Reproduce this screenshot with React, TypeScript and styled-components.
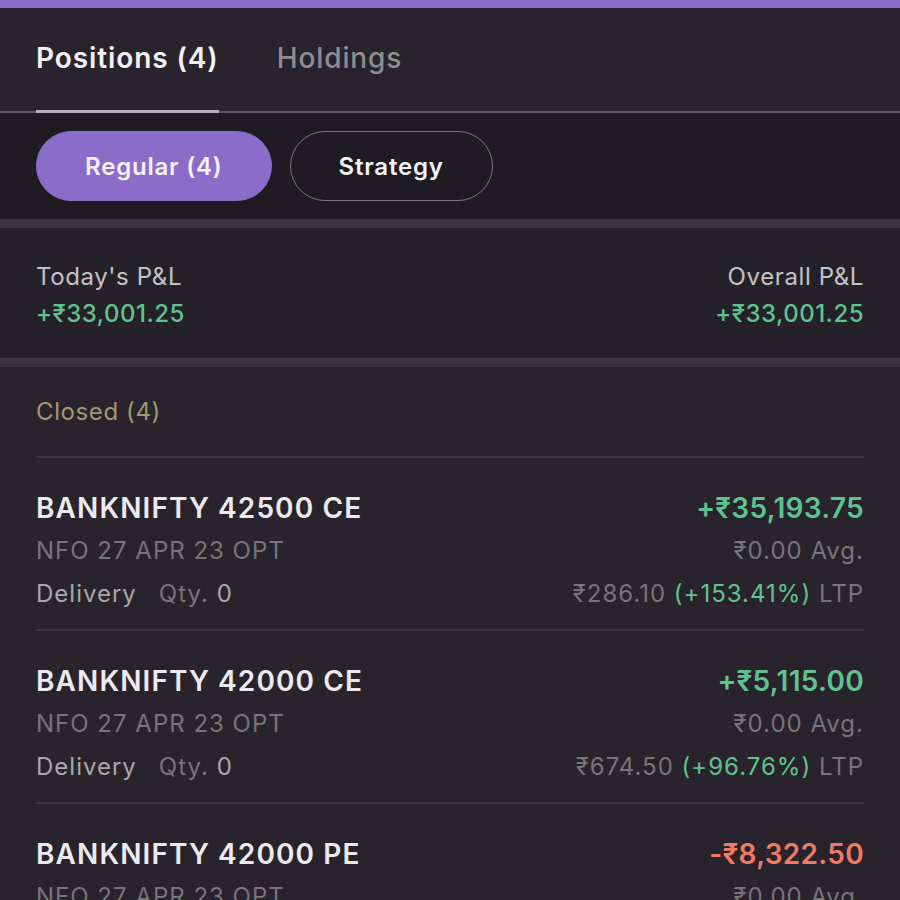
import styled, { createGlobalStyle } from "styled-components";

const Global = createGlobalStyle`
  html, body {
    margin: 0;
    padding: 0;
    background: #28232c;
  }
  body {
    font-family: Inter, "Noto Sans", sans-serif;
    color: #e8e6ea;
  }
`;

type Position = {
  name: string;
  pnl: string;
  loss?: boolean;
  ltp: string;
  change: string;
};

const positions: Position[] = [
  { name: "BANKNIFTY 42500 CE", pnl: "+₹35,193.75", ltp: "₹286.10", change: "(+153.41%)" },
  { name: "BANKNIFTY 42000 CE", pnl: "+₹5,115.00", ltp: "₹674.50", change: "(+96.76%)" },
  { name: "BANKNIFTY 42000 PE", pnl: "-₹8,322.50", loss: true, ltp: "₹0.00", change: "(0.00%)" },
];

const Screen = styled.div`
  width: 900px;
  height: 900px;
  overflow: hidden;
  background: #28232c;
  border-top: 8px solid #8b6cc9;
  box-sizing: border-box;
`;

const Tabs = styled.div`
  display: flex;
  gap: 58px;
  padding: 0 36px;
  height: 105px;
  border-bottom: 2px solid #5e5b62;
  box-sizing: border-box;
`;

const Tab = styled.div<{ $active?: boolean }>`
  display: flex;
  align-items: center;
  font-size: 28px;
  font-weight: ${({ $active }) => ($active ? 600 : 500)};
  color: ${({ $active }) => ($active ? "#f2f0f4" : "#8f8c94")};
  letter-spacing: 0.9px;
  padding-bottom: 2px;
  margin-bottom: -2px;
  border-bottom: 3px solid ${({ $active }) => ($active ? "#b4b2b8" : "transparent")};
`;

const Filters = styled.div`
  display: flex;
  align-items: center;
  gap: 18px;
  padding: 0 36px;
  height: 106px;
  background: #1e1b22;
  border-bottom: 9px solid #38363c;
`;

const Pill = styled.button<{ $active?: boolean }>`
  height: 70px;
  padding: 0 48px;
  border-radius: 35px;
  font-family: inherit;
  font-size: 24px;
  font-weight: 600;
  letter-spacing: 0.8px;
  color: #f4f2f6;
  background: ${({ $active }) => ($active ? "#8b6cc9" : "transparent")};
  border: 1.5px solid ${({ $active }) => ($active ? "#8b6cc9" : "#7a777e")};
`;

const Summary = styled.div`
  display: flex;
  justify-content: space-between;
  padding: 34px 36px 0;
  height: 139px;
  box-sizing: border-box;
  background: #252128;
  border-bottom: 9px solid #38363c;
`;

const Stat = styled.div<{ $right?: boolean }>`
  display: flex;
  flex-direction: column;
  gap: 8px;
  align-items: ${({ $right }) => ($right ? "flex-end" : "flex-start")};
`;

const StatLabel = styled.div`
  font-size: 24px;
  letter-spacing: 0.6px;
  color: #c4c2c8;
`;

const Green = styled.span`
  color: #5ec48f;
`;

const StatValue = styled(Green)`
  font-size: 24px;
  font-weight: 500;
  letter-spacing: 0.5px;
`;

const List = styled.div`
  padding: 0 36px;
`;

const SectionTitle = styled.div`
  font-size: 24px;
  letter-spacing: 0.6px;
  color: #a49870;
  height: 89px;
  display: flex;
  align-items: center;
  border-bottom: 2px solid #3a373e;
`;

const Item = styled.div`
  display: flex;
  justify-content: space-between;
  padding: 34px 0 19px;
  border-bottom: 2px solid #3a373e;
`;

const Col = styled.div<{ $right?: boolean }>`
  display: flex;
  flex-direction: column;
  gap: 11px;
  align-items: ${({ $right }) => ($right ? "flex-end" : "flex-start")};
`;

const Line = styled.div`
  font-size: 24px;
  line-height: 32px;
  letter-spacing: 1px;
  color: #77747b;
  white-space: nowrap;
`;

const Title = styled(Line)`
  font-size: 28px;
  font-weight: 600;
  letter-spacing: 1.1px;
  color: #eceaee;
`;

const Pnl = styled(Line)<{ $loss?: boolean }>`
  font-size: 28px;
  font-weight: 600;
  letter-spacing: 0.3px;
  color: ${({ $loss }) => ($loss ? "#f07a62" : "#5ec48f")};
`;

const Light = styled.span`
  color: #a9a6ad;
`;

const Spacer = styled.span`
  display: inline-block;
  width: 22px;
`;

export default function App() {
  return (
    <Screen>
      <Global />
      <Tabs>
        <Tab $active>Positions (4)</Tab>
        <Tab>Holdings</Tab>
      </Tabs>
      <Filters>
        <Pill $active>Regular (4)</Pill>
        <Pill>Strategy</Pill>
      </Filters>
      <Summary>
        <Stat>
          <StatLabel>Today's P&amp;L</StatLabel>
          <StatValue>+₹33,001.25</StatValue>
        </Stat>
        <Stat $right>
          <StatLabel>Overall P&amp;L</StatLabel>
          <StatValue>+₹33,001.25</StatValue>
        </Stat>
      </Summary>
      <List>
        <SectionTitle>Closed (4)</SectionTitle>
        {positions.map((p) => (
          <Item key={p.name}>
            <Col>
              <Title>{p.name}</Title>
              <Line>NFO 27 APR 23 OPT</Line>
              <Line>
                <Light>Delivery</Light>
                <Spacer />
                Qty. <Light>0</Light>
              </Line>
            </Col>
            <Col $right>
              <Pnl $loss={p.loss}>{p.pnl}</Pnl>
              <Line>₹0.00 Avg.</Line>
              <Line>
                {p.ltp} <Green>{p.change}</Green> LTP
              </Line>
            </Col>
          </Item>
        ))}
      </List>
    </Screen>
  );
}
